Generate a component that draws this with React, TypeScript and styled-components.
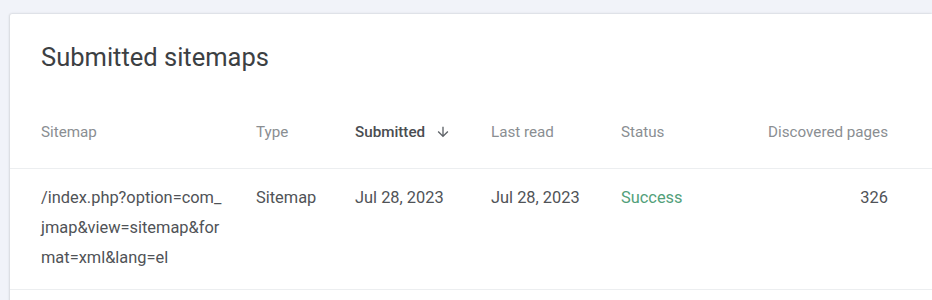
import styled, { createGlobalStyle } from "styled-components";

const GlobalStyle = createGlobalStyle`
  body {
    margin: 0;
    background: #f1f3f9;
    font-family: Roboto, "Noto Sans", Arial, sans-serif;
  }
`;

type Col = {
  label: string;
  width: string;
  active?: boolean;
  right?: boolean;
};

const columns: Col[] = [
  { label: "Sitemap", width: "215px" },
  { label: "Type", width: "99px" },
  { label: "Submitted", width: "136px", active: true },
  { label: "Last read", width: "130px" },
  { label: "Status", width: "146px" },
  { label: "Discovered pages", width: "121px", right: true },
];

const grid = columns.map((c) => c.width).join(" ");

const App = () => {
  return (
    <>
      <GlobalStyle />
      <Page>
        <Card>
          <Title>Submitted sitemaps</Title>
          <HeadRow>
            {columns.map((c) => (
              <HeadCell key={c.label} $active={c.active} $right={c.right}>
                {c.label}
                {c.active && (
                  <Arrow viewBox="0 0 24 24">
                    <path d="M20 12l-1.41-1.41L13 16.17V4h-2v12.17l-5.58-5.59L4 12l8 8 8-8z" />
                  </Arrow>
                )}
              </HeadCell>
            ))}
          </HeadRow>
          <BodyRow>
            <UrlCell>/index.php?option=com_jmap&amp;view=sitemap&amp;format=xml&amp;lang=el</UrlCell>
            <Cell>Sitemap</Cell>
            <Cell>Jul 28, 2023</Cell>
            <Cell>Jul 28, 2023</Cell>
            <Cell $status>Success</Cell>
            <Cell $right>326</Cell>
          </BodyRow>
        </Card>
      </Page>
    </>
  );
};

export default App;

const Page = styled.div`
  padding: 14px 0 0 10px;
  height: 286px;
  overflow: hidden;
`;

const Card = styled.div`
  background: #fff;
  min-height: 300px;
  box-shadow: -1px 0 2px rgba(60, 64, 67, 0.12), 0 -1px 2px rgba(60, 64, 67, 0.08);
  border-radius: 2px 0 0 0;
`;

const Title = styled.div`
  padding: 27px 0 0 31px;
  height: 58px;
  box-sizing: border-box;
  font-size: 25.5px;
  line-height: 32px;
  color: #3c4043;
`;

const HeadRow = styled.div`
  display: grid;
  grid-template-columns: ${grid};
  padding-left: 31px;
  height: 97px;
  align-items: end;
  padding-bottom: 26px;
  box-sizing: border-box;
  border-bottom: 1px solid #eceef0;
`;

const HeadCell = styled.div<{ $active?: boolean; $right?: boolean }>`
  display: flex;
  align-items: center;
  justify-content: ${(p) => (p.$right ? "flex-end" : "flex-start")};
  font-size: 15.2px;
  line-height: 20px;
  white-space: nowrap;
  color: ${(p) => (p.$active ? "#4a4d51" : "#8a8e92")};
  font-weight: ${(p) => (p.$active ? 500 : 400)};
`;

const Arrow = styled.svg`
  width: 16px;
  height: 16px;
  margin-left: 10px;
  fill: #5f6368;
`;

const BodyRow = styled.div`
  display: grid;
  grid-template-columns: ${grid};
  padding: 14px 0 16px 31px;
  border-bottom: 1px solid #eceef0;
  font-size: 16.4px;
  line-height: 30px;
  color: #505357;
`;

const UrlCell = styled.div`
  word-break: break-all;
  padding-right: 31px;
`;

const Cell = styled.div<{ $status?: boolean; $right?: boolean }>`
  white-space: nowrap;
  color: ${(p) => (p.$status ? "#52a07a" : "#505357")};
  text-align: ${(p) => (p.$right ? "right" : "left")};
`;
